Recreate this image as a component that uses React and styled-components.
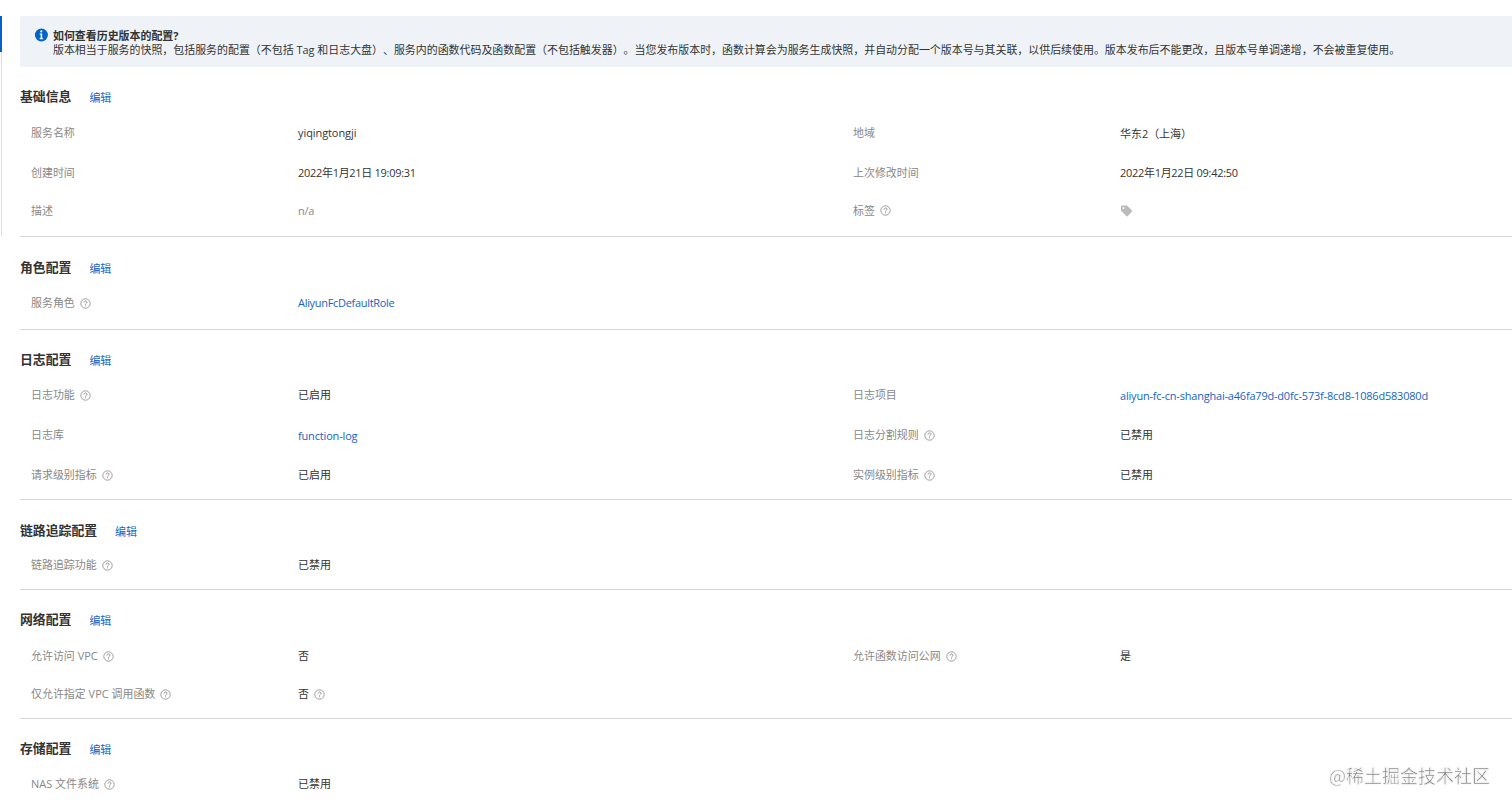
import React from "react";
import styled, { createGlobalStyle } from "styled-components";

const GlobalStyle = createGlobalStyle`
  html,
  body {
    margin: 0;
    background: #fff;
    overflow: hidden;
  }
  * {
    box-sizing: border-box;
  }
`;

const Page = styled.div`
  display: flex;
  width: 1512px;
  height: 809px;
  overflow: hidden;
  color: #333;
  font-family: "Open Sans", "Noto Sans CJK SC", sans-serif;
  font-size: 10.96px;
  line-height: 16px;
  text-spacing-trim: space-all;
`;

const Rail = styled.div`
  flex: none;
  width: 20px;
  padding-top: 16px;
`;

const RailTrack = styled.div`
  width: 2px;
  height: 220px;
  border-right: 1px solid #d9dce4;
`;

const RailActive = styled.div`
  width: 2px;
  height: 36px;
  background: #0064c8;
`;

const Content = styled.main`
  flex: none;
  width: 1560px;
  padding-top: 16px;
`;

const Notice = styled.div`
  display: flex;
  height: 51px;
  padding: 12px 14px;
  border-radius: 2px;
  background: #eff3f8;
`;

const NoticeBody = styled.div`
  margin-left: 5px;
  padding-top: 1px;
  font-size: 10.95px;
  line-height: 14px;
  white-space: nowrap;
`;

const NoticeTitle = styled.div`
  font-weight: bold;
`;

const Section = styled.section`
  padding: ${({ $top }) => $top}px 0 ${({ $bottom }) => $bottom}px;
  border-bottom: 1px solid #d3d5d9;
`;

const SectionHead = styled.div`
  display: flex;
  align-items: center;
  height: 26px;
  margin-bottom: ${({ $gap }) => $gap}px;
`;

const Title = styled.h3`
  margin: 0 18px 0 0;
  padding-bottom: 2px;
  font-size: 12.85px;
  font-weight: bold;
  line-height: 18px;
`;

const Link = styled.a`
  color: #1464c4;
  text-decoration: none;
  cursor: pointer;
`;

const EditLink = styled(Link)`
  padding-top: 1px;
`;

const VersionBtn = styled.button`
  width: 72px;
  height: 22px;
  margin-left: auto;
  margin-right: -8px;
  padding: 0 7px;
  border: 1px solid #c4c6cf;
  border-radius: 2px;
  background: #fff;
  color: #333;
  font: inherit;
  text-align: left;
`;

const Row = styled.div`
  display: grid;
  grid-template-columns: 267px 555px 267px 1fr;
  align-items: center;
  height: ${({ $height }) => $height}px;
  padding-left: 11px;
`;

const Cell = styled.div`
  display: flex;
  align-items: center;
  gap: 5px;
  padding-top: ${({ $drop }) => $drop || 0}px;
  color: ${({ $muted }) => ($muted ? "#888" : "#333")};
  letter-spacing: ${({ $track }) => $track || 0}px;
  white-space: nowrap;
`;

const Watermark = styled.div`
  position: fixed;
  right: 22px;
  bottom: 21px;
  color: #808080;
  font-family: "Noto Sans CJK SC", sans-serif;
  font-size: 18px;
  line-height: 26px;
  -webkit-text-stroke: 0.5px #fff;
  text-shadow: 0 0 2px #ddd;
`;

const InfoIcon = () => (
  <svg width="14" height="14" viewBox="0 0 14 14">
    <circle cx="7.4" cy="7" r="6.5" fill="#0064c8" />
    <circle cx="7.3" cy="3.4" r="1.1" fill="#fff" />
    <path d="M5.6 5.5H8.2V10.3H9.2V11.2H5.6V10.3H6.6V6.4H5.6Z" fill="#fff" />
  </svg>
);

const HelpIcon = () => (
  <svg width="11" height="11" viewBox="0 0 11 11" fill="none" stroke="#888">
    <circle cx="5.5" cy="5.5" r="4.7" strokeWidth="0.8" />
    <path d="M4 4.5C4 2.5 7 2.5 7 4.3C7 5.4 5.5 5.3 5.5 6.6" strokeWidth="0.9" />
    <path d="M5.5 7.4V8.3" strokeWidth="0.9" />
  </svg>
);

const TagIcon = () => (
  <svg width="13" height="12" viewBox="0 0 13 12">
    <path
      fillRule="evenodd"
      d="M1.4 .5H7L12 5.6Q12.5 6.1 12 6.6L7.6 11.3Q7.1 11.7 6.6 11.3L1 5.7V1Q1 .5 1.4 .5ZM3.4 2A1 1 0 1 0 3.4 4A1 1 0 1 0 3.4 2Z"
      fill="#bbb"
    />
  </svg>
);

// a field is { label, value, help, link, muted, drop, track, valueHelp }
const sections = [
  {
    title: "基础信息",
    top: 17,
    gap: 3,
    bottom: 7,
    version: true,
    rows: [
      {
        height: 40,
        fields: [
          { label: "服务名称", value: "yiqingtongji", track: -0.06 },
          { label: "地域", value: "华东2（上海）", drop: 1 },
        ],
      },
      {
        height: 39,
        fields: [
          { label: "创建时间", value: "2022年1月21日 19:09:31", track: -0.27 },
          { label: "上次修改时间", value: "2022年1月22日 09:42:50", track: -0.27 },
        ],
      },
      {
        height: 37,
        fields: [
          { label: "描述", value: "n/a", muted: true, track: -0.2 },
          { label: "标签", help: true, value: <TagIcon /> },
        ],
      },
    ],
  },
  {
    title: "角色配置",
    top: 18,
    gap: 2,
    bottom: 6,
    rows: [
      {
        height: 40,
        fields: [
          { label: "服务角色", help: true, value: "AliyunFcDefaultRole", link: true, track: -0.28 },
        ],
      },
    ],
  },
  {
    title: "日志配置",
    top: 17,
    gap: 2,
    bottom: 4,
    rows: [
      {
        height: 40,
        fields: [
          { label: "日志功能", help: true, value: "已启用" },
          {
            label: "日志项目",
            value: "aliyun-fc-cn-shanghai-a46fa79d-d0fc-573f-8cd8-1086d583080d",
            link: true,
            drop: 2,
            track: -0.18,
          },
        ],
      },
      {
        height: 40,
        fields: [
          { label: "日志库", value: "function-log", link: true, drop: 2, track: -0.15 },
          { label: "日志分割规则", help: true, value: "已禁用" },
        ],
      },
      {
        height: 40,
        fields: [
          { label: "请求级别指标", help: true, value: "已启用" },
          { label: "实例级别指标", help: true, value: "已禁用" },
        ],
      },
    ],
  },
  {
    title: "链路追踪配置",
    top: 18,
    gap: 1,
    bottom: 4,
    rows: [
      { height: 40, fields: [{ label: "链路追踪功能", help: true, value: "已禁用" }] },
    ],
  },
  {
    title: "网络配置",
    top: 17,
    gap: 3,
    bottom: 6,
    rows: [
      {
        height: 40,
        fields: [
          { label: "允许访问 VPC", help: true, value: "否" },
          { label: "允许函数访问公网", help: true, value: "是" },
        ],
      },
      {
        height: 36,
        fields: [
          { label: "仅允许指定 VPC 调用函数", help: true, value: "否", valueHelp: true },
        ],
      },
    ],
  },
  {
    title: "存储配置",
    top: 17,
    gap: 2,
    bottom: 20,
    rows: [
      { height: 40, fields: [{ label: "NAS 文件系统", help: true, value: "已禁用" }] },
    ],
  },
];

const Field = ({ field }) => (
  <>
    <Cell $muted>
      {field.label}
      {field.help && <HelpIcon />}
    </Cell>
    <Cell $muted={field.muted} $drop={field.drop} $track={field.track}>
      {field.link ? <Link>{field.value}</Link> : field.value}
      {field.valueHelp && <HelpIcon />}
    </Cell>
  </>
);

const App = () => {
  return (
    <Page>
      <GlobalStyle />
      <Rail>
        <RailTrack>
          <RailActive />
        </RailTrack>
      </Rail>
      <Content>
        <Notice>
          <InfoIcon />
          <NoticeBody>
            <NoticeTitle>如何查看历史版本的配置?</NoticeTitle>
            <div>
              版本相当于服务的快照，包括服务的配置（不包括 Tag
              和日志大盘）、服务内的函数代码及函数配置（不包括触发器）。当您发布版本时，函数计算会为服务生成快照，并自动分配一个版本号与其关联，以供后续使用。版本发布后不能更改，且版本号单调递增，不会被重复使用。
            </div>
          </NoticeBody>
        </Notice>
        {sections.map((section) => (
          <Section key={section.title} $top={section.top} $bottom={section.bottom}>
            <SectionHead $gap={section.gap}>
              <Title>{section.title}</Title>
              <EditLink>编辑</EditLink>
              {section.version && <VersionBtn>版本管理</VersionBtn>}
            </SectionHead>
            {section.rows.map((row) => (
              <Row key={row.fields[0].label} $height={row.height}>
                {row.fields.map((field) => (
                  <Field key={field.label} field={field} />
                ))}
              </Row>
            ))}
          </Section>
        ))}
      </Content>
      <Watermark>@稀土掘金技术社区</Watermark>
    </Page>
  );
};

export default App;
